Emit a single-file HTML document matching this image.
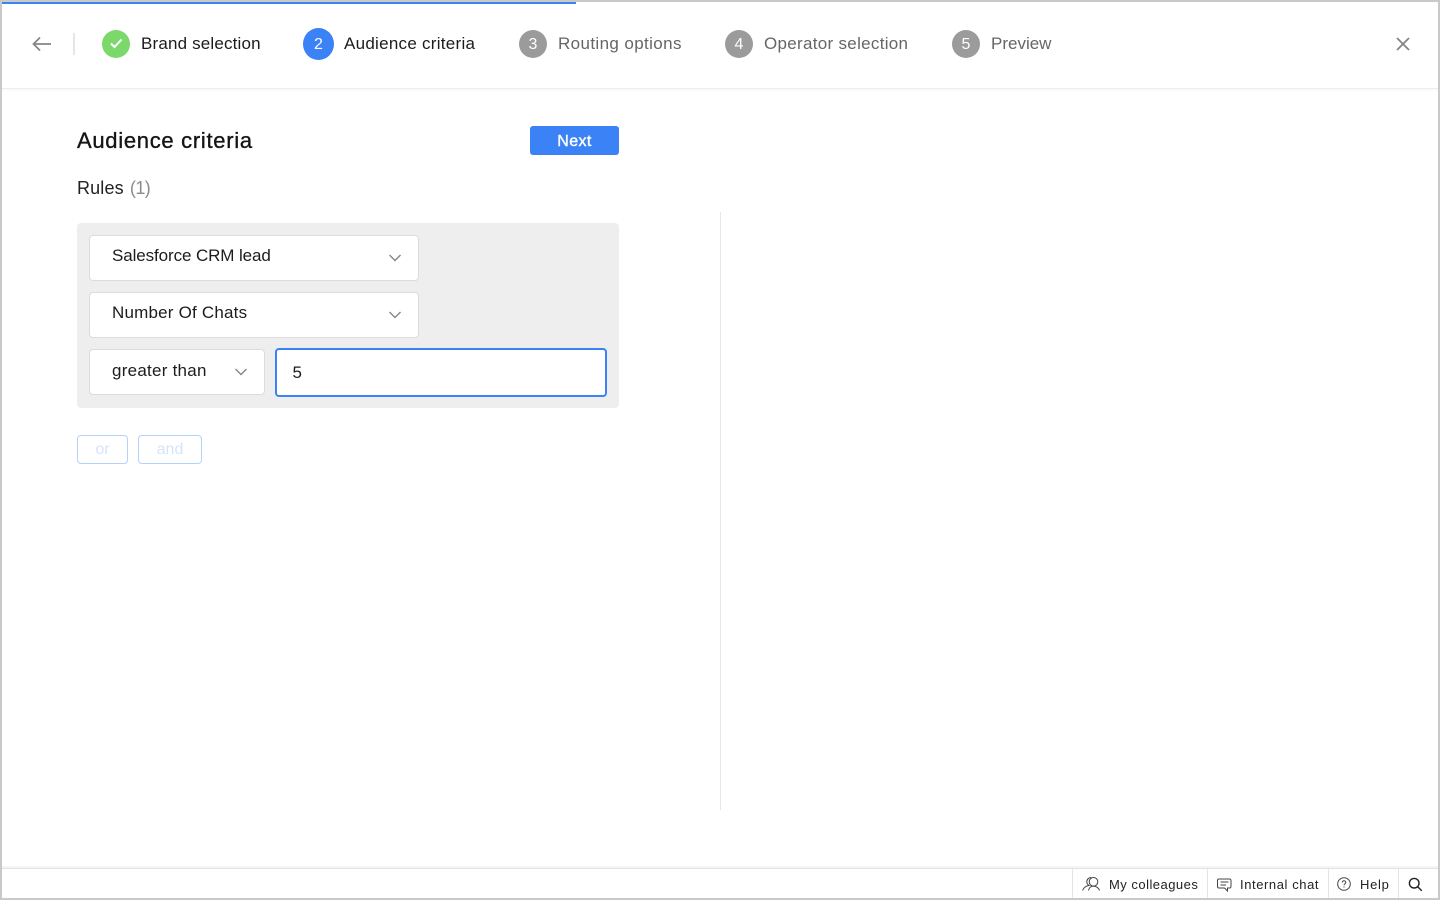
<!DOCTYPE html>
<html lang="en">
<head>
<meta charset="utf-8">
<title>Audience criteria</title>
<style>
html,body{margin:0;padding:0;width:1440px;height:900px;overflow:hidden;background:#fff;font-family:"Liberation Sans",sans-serif;color:#1c1c1c}
.a{position:absolute;box-sizing:border-box}
.t{position:absolute;white-space:nowrap;line-height:20px}
.step{font-size:17px;height:20px;top:34px}
.num{position:absolute;width:28px;height:28px;top:30px;border-radius:50%;background:#9b9b9b;color:#fff;font-size:16px;line-height:30px;text-align:center}
.sel{position:absolute;box-sizing:border-box;background:#fff;border:1px solid #dcdcdc;border-radius:4px;height:46px}
.foot{font-size:13px;top:875px;color:#222}
.sep{position:absolute;top:869px;width:1px;height:29px;background:#e4e4e4}
svg{position:absolute;overflow:visible}
</style>
</head>
<body>
<div class="a" style="left:0;top:0;width:1440px;height:900px;border:2px solid #c9c9c9"></div>
<div class="a" style="left:2px;top:2px;width:574px;height:2px;background:#3b82f6"></div>
<div class="a" style="left:2px;top:88px;width:1436px;height:1px;background:#ececec"></div>
<div class="a" style="left:2px;top:89px;width:1436px;height:2px;background:#fafafa"></div>

<svg style="left:32px;top:36px" width="20" height="16" viewBox="0 0 20 16" fill="none" stroke="#858585" stroke-width="1.7"><path d="M19 8H1.500M8 1.500 1.500 8 8 14.500"/></svg>
<div class="a" style="left:73px;top:33px;width:2px;height:22px;background:#e6e6e6"></div>

<div class="num" style="left:102px;background:#7bd96b"></div>
<svg style="left:102px;top:29px" width="28" height="28" viewBox="0 0 28 28" fill="none" stroke="#fff" stroke-width="2"><path d="M9 14.500 12.500 18 19.500 10.500"/></svg>
<div class="t step" style="left:141px;letter-spacing:.17px">Brand selection</div>

<div class="num" style="left:303px;top:28px;width:31px;height:32px;line-height:33px;background:#3b82f6">2</div>
<div class="t step" style="left:344px;letter-spacing:.27px">Audience criteria</div>

<div class="num" style="left:519px">3</div>
<div class="t step" style="left:558px;color:#666;letter-spacing:.38px">Routing options</div>
<div class="num" style="left:725px">4</div>
<div class="t step" style="left:764px;color:#666;letter-spacing:.3px">Operator selection</div>
<div class="num" style="left:952px">5</div>
<div class="t step" style="left:991px;color:#666;letter-spacing:0">Preview</div>

<svg style="left:1396px;top:37px" width="14" height="14" viewBox="0 0 14 14" fill="none" stroke="#858585" stroke-width="1.8"><path d="M1 1 13 13M13 1 1 13"/></svg>

<div class="t" style="left:77px;top:129px;font-size:22px;line-height:24px;color:#151515;letter-spacing:.7px;-webkit-text-stroke:.35px #151515">Audience criteria</div>
<div class="a" style="left:530px;top:126px;width:89px;height:29px;background:#3b82f6;border-radius:3px;color:#fff;font-size:16px;line-height:31px;text-align:center;letter-spacing:.4px;-webkit-text-stroke:.4px #fff">Next</div>
<div class="t" style="left:77px;top:178px;font-size:18px;color:#222;letter-spacing:.15px">Rules <span style="color:#8c8c8c;letter-spacing:-.6px;margin-left:1px">(1)</span></div>

<div class="a" style="left:77px;top:223px;width:542px;height:185px;background:#eeeeee;border-radius:4px"></div>

<div class="sel" style="left:89px;top:235px;width:330px"></div>
<div class="t" style="left:112px;top:246px;font-size:17px;letter-spacing:-.1px">Salesforce CRM lead</div>
<svg style="left:389px;top:254px" width="12" height="8" viewBox="0 0 12 8" fill="none" stroke="#858585" stroke-width="1.4"><path d="M.5 1 6 6.500 11.500 1"/></svg>

<div class="sel" style="left:89px;top:292px;width:330px"></div>
<div class="t" style="left:112px;top:303px;font-size:17px;letter-spacing:.2px">Number Of Chats</div>
<svg style="left:389px;top:311px" width="12" height="8" viewBox="0 0 12 8" fill="none" stroke="#858585" stroke-width="1.4"><path d="M.5 1 6 6.500 11.500 1"/></svg>

<div class="sel" style="left:89px;top:349px;width:176px"></div>
<div class="t" style="left:112px;top:361px;font-size:17px;letter-spacing:.25px">greater than</div>
<svg style="left:235px;top:368px" width="12" height="8" viewBox="0 0 12 8" fill="none" stroke="#858585" stroke-width="1.4"><path d="M.5 1 6 6.500 11.500 1"/></svg>

<div class="a" style="left:275px;top:348px;width:332px;height:49px;background:#fff;border:2px solid #3b82f6;border-radius:4px"></div>
<div class="t" style="left:292.500px;top:363px;font-size:17px">5</div>

<div class="a" style="left:77px;top:435px;width:51px;height:29px;border:1px solid #b5d2fb;border-radius:4px;color:#d6e4fb;font-size:16px;line-height:27px;text-align:center">or</div>
<div class="a" style="left:138px;top:435px;width:64px;height:29px;border:1px solid #b5d2fb;border-radius:4px;color:#d6e4fb;font-size:16px;line-height:27px;text-align:center">and</div>

<div class="a" style="left:720px;top:212px;width:1px;height:598px;background:#e6e6e6"></div>

<div class="a" style="left:2px;top:866px;width:1436px;height:2px;background:#f5f5f5"></div>
<div class="a" style="left:2px;top:868px;width:1436px;height:1px;background:#e2e2e2"></div>
<div class="sep" style="left:1072px"></div>
<div class="sep" style="left:1207px"></div>
<div class="sep" style="left:1328px"></div>
<div class="sep" style="left:1398px"></div>

<svg style="left:1082px;top:877px" width="18" height="14" viewBox="0 0 18 14" fill="none" stroke="#444" stroke-width="1"><circle cx="11.500" cy="4.800" r="4.300"/><path d="M6.500 13.500C7 10.800 9 9.100 11.500 9.100S16.800 10.800 17.500 13.500"/><path d="M9.500 .8C7.500 .2 4.800 1.800 4.800 4.800 4.800 6.300 5.600 7.700 7 8.500 4 9 1.500 10.800.6 13.500"/></svg>
<div class="t foot" style="left:1109px;letter-spacing:.48px">My colleagues</div>

<svg style="left:1217px;top:878px" width="15" height="14" viewBox="0 0 15 14" fill="none" stroke="#444" stroke-width="1"><path d="M2 1H12.500A1.500 1.500 0 0 1 14 2.500V8.500A1.500 1.500 0 0 1 12.500 10H10.500V13L7.500 10H2A1.500 1.500 0 0 1 .5 8.500V2.500A1.500 1.500 0 0 1 2 1Z"/><path d="M3.500 4H11.500M3.500 7H9"/></svg>
<div class="t foot" style="left:1240px;letter-spacing:.58px">Internal chat</div>

<svg style="left:1337px;top:877px" width="14" height="14" viewBox="0 0 14 14" fill="none" stroke="#444" stroke-width="1"><circle cx="7" cy="7" r="6.300"/><path d="M5.200 5.500C5.200 4.400 6 3.800 7 3.800S8.800 4.500 8.800 5.400C8.800 6.700 7 6.800 7 8.300M7 9.500V10.500"/></svg>
<div class="t foot" style="left:1360px;letter-spacing:.7px">Help</div>

<svg style="left:1408px;top:877px" width="15" height="15" viewBox="0 0 15 15" fill="none" stroke="#222" stroke-width="1.400"><circle cx="6.200" cy="6.200" r="4.800"/><path d="M9.700 9.700 13.800 13.800"/></svg>
</body>
</html>
